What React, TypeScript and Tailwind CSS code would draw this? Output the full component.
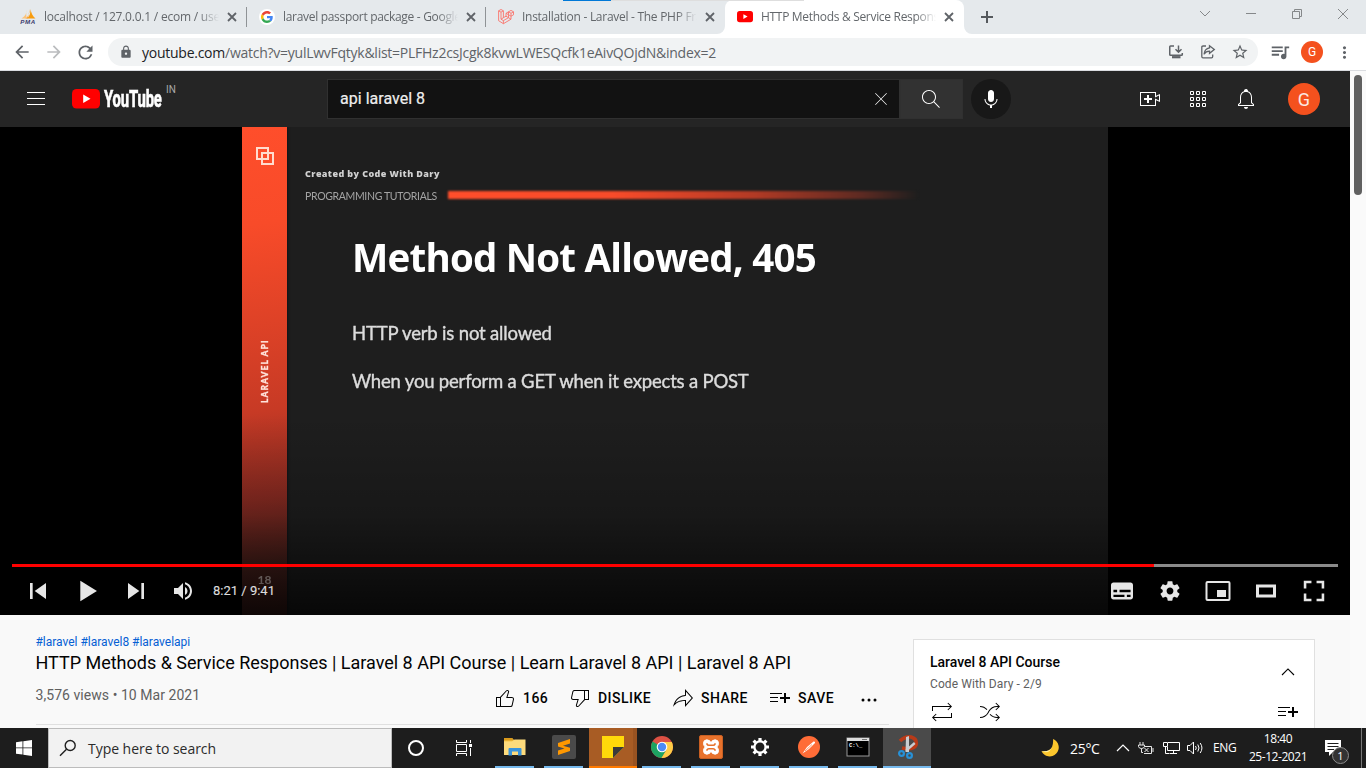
import React from "react";
import { MdArrowBack, MdArrowForward, MdRefresh, MdLock, MdStarBorder, MdQueueMusic, MdMoreVert } from "react-icons/md";

const ui = "font-['Open_Sans','Noto_Sans',sans-serif]";
const rb = "font-[Roboto,sans-serif]";

type IconProps = { d: string; size?: number; box?: number; className?: string };
const Icon = ({ d, size = 24, box = 24, className = "" }: IconProps) => (
  <svg width={size} height={size} viewBox={`0 0 ${box} ${box}`} fill="currentColor" className={`block shrink-0 ${className}`}>
    <path fillRule="evenodd" d={d} />
  </svg>
);

const P = {
  menu: "M21,6H3V5h18V6z M21,11H3v1h18V11z M21,17H3v1h18V17z",
  search:
    "M20.87,20.17l-5.59-5.59C16.35,13.35,17,11.75,17,10c0-3.87-3.13-7-7-7s-7,3.13-7,7s3.13,7,7,7c1.75,0,3.35-0.65,4.58-1.71 l5.59,5.59L20.87,20.17z M10,16c-3.31,0-6-2.69-6-6s2.69-6,6-6s6,2.69,6,6S13.31,16,10,16z",
  clear:
    "M12.71,12l8.15,8.15l-0.71,0.71L12,12.71l-8.15,8.15l-0.71-0.71L11.29,12L3.15,3.85l0.71-0.71L12,11.29l8.15-8.15l0.71,0.71 L12.71,12z",
  mic: "M12 3C10.34 3 9 4.37 9 6.07V11.93C9 13.63 10.34 15 12 15C13.66 15 15 13.63 15 11.93V6.07C15 4.37 13.66 3 12 3ZM18.5 12H17.5C17.5 15.03 15.03 17.5 12 17.5C8.97 17.5 6.5 15.03 6.5 12H5.5C5.5 15.24 7.89 17.93 11 18.41V21H13V18.41C16.11 17.93 18.5 15.24 18.5 12Z",
  create:
    "M14,13h-3v3H9v-3H6v-2h3V8h2v3h3V13z M17,6H3v12h14v-6.39l4,1.83V8.56l-4,1.83V6 M18,5v3.83L22,7v8l-4-1.83V19H2V5H18L18,5 z",
  bell: "M10,20h4c0,1.1-0.9,2-2,2S10,21.1,10,20z M20,17.35V19H4v-1.65l2-1.88v-5.15c0-2.92,1.56-5.22,4-5.98V3.96 c0-1.42,1.49-2.5,2.99-1.76C13.64,2.52,14,3.23,14,3.96l0,0.39c2.44,0.75,4,3.06,4,5.98v5.15L20,17.35z M19,17.77l-2-1.88v-5.47 c0-2.47-1.19-4.36-3.13-5.1c-1.26-0.53-2.64-0.5-3.84,0.03C8.15,6.11,7,7.99,7,10.42v5.47l-2,1.88V18h14V17.77z",
  like: "M18.77,11h-4.23l1.52-4.94C16.38,5.03,15.54,4,14.38,4c-0.58,0-1.14,0.24-1.52,0.65L7,11H3v10h4h1h9.43 c1.06,0,1.98-0.67,2.19-1.61l1.34-6C21.23,12.15,20.18,11,18.77,11z M7,20H4v-8h3V20z M19.98,13.17l-1.34,6 C18.54,19.65,18.03,20,17.43,20H8v-8.61l5.6-6.06C13.79,5.12,14.08,5,14.38,5c0.26,0,0.5,0.11,0.63,0.3 c0.07,0.1,0.15,0.26,0.09,0.47l-1.52,4.94L13.18,12h1.35h4.23c0.41,0,0.8,0.17,1.03,0.46C19.92,12.61,20.05,12.86,19.98,13.17z",
  dislike:
    "M17,4h-1H6.57C5.5,4,4.59,4.67,4.38,5.61l-1.34,6C2.77,12.85,3.82,14,5.23,14h4.23l-1.52,4.94C7.62,19.97,8.46,21,9.62,21 c0.58,0,1.14-0.24,1.52-0.65L17,14h4V4H17z M10.4,19.67C10.21,19.88,9.92,20,9.62,20c-0.26,0-0.5-0.11-0.63-0.3 c-0.07-0.1-0.15-0.26-0.09-0.47l1.52-4.94l0.4-1.29H9.46H5.23c-0.41,0-0.8-0.17-1.03-0.46c-0.12-0.15-0.25-0.4-0.18-0.72l1.34-6 C5.46,5.35,5.97,5,6.57,5H16v8.61L10.4,19.67z M20,13h-3V5h3V13z",
  share:
    "M15,5.63L20.66,12L15,18.37V15v-1h-1c-3.96,0-7.14,1-9.75,3.09c1.84-4.07,5.11-6.4,9.89-7.1L15,9.86V9V5.63 M14,3v6 C6.22,10.13,3.11,15.33,2,21c2.78-3.97,6.44-6,12-6v6l8-9L14,3L14,3z",
  save: "M22,13h-4v4h-2v-4h-4v-2h4V7h2v4h4V13z M14,7H2v1h12V7z M2,12h8v-1H2V12z M2,16h8v-1H2V16z",
  more: "M7.5,12a1.5,1.5 0 1 1 -3,0a1.5,1.5 0 1 1 3,0z M13.5,12a1.5,1.5 0 1 1 -3,0a1.5,1.5 0 1 1 3,0z M19.5,12a1.5,1.5 0 1 1 -3,0a1.5,1.5 0 1 1 3,0z",
  loop: "M21,13h1v5L3.93,18.03l2.62,2.62l-0.71,0.71L1.99,17.5l3.85-3.85l0.71,0.71l-2.67,2.67L21,17V13z M3,7l17.12-0.03 l-2.67,2.67l0.71,0.71l3.85-3.85l-3.85-3.85l-0.71,0.71l2.62,2.62L2,6v5h1V7z",
  shuffle:
    "M18.15,13.65L22,17.5l-3.85,3.85l-0.71-0.71L20.09,18H19c-2.84,0-5.53-1.23-7.39-3.38l0.76-0.65 C14.03,15.89,16.45,17,19,17h1.09l-2.65-2.65L18.15,13.65z M19,7h1.09l-2.65,2.65l0.71,0.71L22,6.5l-3.85-3.85l-0.71,0.71 L20.09,6H19c-3.58,0-6.86,1.95-8.57,5.09l-0.73,1.34C8.16,15.25,5.21,17,2,17v1c3.58,0,6.86-1.95,8.57-5.09l0.73-1.34 C12.84,8.75,15.79,7,19,7z M8.59,9.98l0.75-0.66C7.49,7.21,4.81,6,2,6v1C4.52,7,6.92,8.09,8.59,9.98z",
  up: "M18.4,14.6L12,8.3l-6.4,6.3l0.8,0.8L12,9.7l5.6,5.7L18.4,14.6z",
  prev: "m 12,12 h 2 v 12 h -2 z m 3.5,6 8.5,6 V 12 z",
  next: "M 12,24 20.5,18 12,12 V 24 z M 22,12 v 12 h 2 V 12 h -2 z",
  play: "M 12,26 25,18 12,10 z",
  volume:
    "M8,21 L12,21 L17,26 L17,10 L12,15 L8,15 L8,21 Z M19,14 L19,22 C20.48,21.32 21.5,19.77 21.5,18 C21.5,16.26 20.48,14.74 19,14 Z M19,11.29 C21.89,12.15 24,14.83 24,18 C24,21.17 21.89,23.85 19,24.71 L19,26.77 C23.01,25.86 26,22.28 26,18 C26,13.72 23.01,10.14 19,9.23 L19,11.29 Z",
  cc: "M11,11 C9.9,11 9,11.9 9,13 L9,23 C9,24.1 9.9,25 11,25 L25,25 C26.1,25 27,24.1 27,23 L27,13 C27,11.9 26.1,11 25,11 L11,11 Z M11,17 L14,17 L14,19 L11,19 Z M20,23 L11,23 L11,21 L20,21 Z M25,23 L22,23 L22,21 L25,21 Z M25,19 L16,19 L16,17 L25,17 Z",
  gear: "m 23.94,18.78 c .03,-0.25 .05,-0.51 .05,-0.78 0,-0.27 -0.02,-0.52 -0.05,-0.78 l 1.68,-1.32 c .15,-0.12 .19,-0.33 .09,-0.51 l -1.6,-2.76 c -0.09,-0.17 -0.31,-0.24 -0.48,-0.17 l -1.99,.8 c -0.41,-0.32 -0.86,-0.58 -1.35,-0.78 l -0.30,-2.12 c -0.02,-0.19 -0.19,-0.33 -0.39,-0.33 l -3.2,0 c -0.2,0 -0.36,.14 -0.39,.33 l -0.30,2.12 c -0.48,.2 -0.93,.47 -1.35,.78 l -1.99,-0.8 c -0.18,-0.07 -0.39,0 -0.48,.17 l -1.6,2.76 c -0.10,.17 -0.05,.39 .09,.51 l 1.68,1.32 c -0.03,.25 -0.05,.52 -0.05,.78 0,.26 .02,.52 .05,.78 l -1.68,1.32 c -0.15,.12 -0.19,.33 -0.09,.51 l 1.6,2.76 c .09,.17 .31,.24 .48,.17 l 1.99,-0.8 c .41,.32 .86,.58 1.35,.78 l .30,2.12 c .02,.19 .19,.33 .39,.33 l 3.2,0 c .2,0 .36,-0.14 .39,-0.33 l .30,-2.12 c .48,-0.2 .93,-0.47 1.35,-0.78 l 1.99,.8 c .18,.07 .39,0 .48,-0.17 l 1.6,-2.76 c .09,-0.17 .05,-0.39 -0.09,-0.51 l -1.68,-1.32 0,0 z m -5.94,2.01 c -1.54,0 -2.8,-1.25 -2.8,-2.8 0,-1.54 1.25,-2.8 2.8,-2.8 1.54,0 2.8,1.25 2.8,2.8 0,1.54 -1.25,2.8 -2.8,2.8 l 0,0 z",
  full: "m 10,16 2,0 0,-4 4,0 0,-2 L 10,10 l 0,6 0,0 z m 10,-6 0,2 4,0 0,4 2,0 L 26,10 l -6,0 0,0 z m 4,14 -4,0 0,2 6,0 0,-6 -2,0 0,4 0,0 z m -12,-4 -2,0 0,6 6,0 0,-2 -4,0 0,-4 0,0 z",
};

const PmaIcon = () => (
  <svg width="16" height="16" viewBox="0 0 16 16" className="block shrink-0">
    <path d="M6 .5 C7 4 5.5 7 1.500 9.500 H6.500 Z" fill="#fbc37a" />
    <path d="M10.500 0 C11 3.500 12.500 7 15.500 9.500 H7 C10 7 10.500 4 10.500 0Z" fill="#f89c0e" />
    <path d="M9.500 0 C9.800 4 8.500 7.500 5.500 9.500 L8 9.500Z" fill="#f9a63a" />
    <text x="0.3" y="15.200" fontSize="6.200" fontWeight="700" fontStyle="italic" fontFamily="Liberation Sans, sans-serif" fill="#3c3c6e" textLength="15">PMA</text>
  </svg>
);

const GoogleIcon = () => (
  <svg width="16" height="16" viewBox="0 0 16 16" className="block shrink-0">
    <circle cx="8" cy="8" r="8" fill="#fff" />
    <g transform="translate(2 2) scale(.25)">
      <path fill="#EA4335" d="M24 9.5c3.54 0 6.71 1.22 9.21 3.6l6.85-6.85C35.9 2.38 30.47 0 24 0 14.62 0 6.51 5.38 2.56 13.22l7.98 6.19C12.43 13.72 17.74 9.5 24 9.5z" />
      <path fill="#4285F4" d="M46.98 24.55c0-1.57-.15-3.09-.38-4.55H24v9.02h12.94c-.58 2.96-2.26 5.48-4.78 7.18l7.73 6c4.51-4.18 7.09-10.36 7.09-17.65z" />
      <path fill="#FBBC05" d="M10.53 28.59c-.48-1.45-.76-2.99-.76-4.59s.27-3.14.76-4.59l-7.98-6.19C.92 16.46 0 20.12 0 24c0 3.88.92 7.54 2.56 10.78l7.97-6.19z" />
      <path fill="#34A853" d="M24 48c6.48 0 11.93-2.13 15.89-5.81l-7.73-6c-2.15 1.45-4.92 2.3-8.16 2.3-6.26 0-11.57-4.22-13.47-9.91l-7.98 6.19C6.51 42.62 14.62 48 24 48z" />
    </g>
  </svg>
);

const LaravelIcon = () => (
  <svg width="16" height="16" viewBox="0 0 16 16" fill="none" stroke="#f9746c" strokeWidth="0.9" strokeLinejoin="round" className="block shrink-0">
    <path d="M.6 1.8 3 .5 5.400 1.800V8.700L8 7.200V4.300L10.500 5.700V8.700L5.400 11.600V14.700L.6 11.700ZM.6 1.800 3 3.200 5.400 1.800M3 3.200V10.200L5.400 8.700M3 10.200 5.400 11.600M8 4.300 10.500 2.800 10.500 5.700M10.500 2.800 13 1.400 15.500 2.800V5.800L13 7.200V10.200L5.400 14.700M10.500 2.800 13 4.300 15.500 2.800M13 4.300V7.200L10.500 5.700M8 7.200 10.500 8.700 13 10.200" />
  </svg>
);

const YtBadge = ({ w = 16 }: { w?: number }) => (
  <svg width={w} height={w * 0.7} viewBox="0 0 28 19.6" className="block shrink-0">
    <rect width="28" height="19.6" rx="4.6" fill="#f00" />
    <path d="M11.200 5.600 18.500 9.800 11.200 14Z" fill="#fff" />
  </svg>
);

const Tab = ({ icon, title, tracking, active, sep }: { icon: React.ReactNode; title: string; tracking: string; active?: boolean; sep?: boolean }) => (
  <div className={`relative flex h-[34px] w-[239px] shrink-0 items-center pl-3 ${active ? "rounded-t-lg bg-white" : ""}`}>
    {active && (
      <svg width="255" height="8" viewBox="0 0 255 8" className="absolute bottom-0 -left-2">
        <path d="M0 8A8 8 0 0 0 8 0V8ZM255 8A8 8 0 0 1 247 0V8Z" fill="#fff" />
      </svg>
    )}
    <div className="flex w-4 justify-center">{icon}</div>
    <div className={`ml-2 w-[175px] overflow-hidden text-[12px] whitespace-nowrap text-[#63676b] [mask-image:linear-gradient(90deg,#000_88%,transparent)] ${tracking}`}>{title}</div>
    <svg width="10" height="10" viewBox="0 0 10 10" className="ml-2 shrink-0" stroke="#5f6368" strokeWidth="1.800">
      <path d="M1 1 9 9M9 1 1 9" />
    </svg>
    {sep && <div className="absolute top-[7px] right-0 h-5 w-px bg-[#8f9396]" />}
  </div>
);

const Toolbar = () => (
  <div className="flex h-[37px] items-center border-b border-[#dadce0] bg-white pl-3 text-[#5f6368]">
    <MdArrowBack size={20} />
    <MdArrowForward size={20} className="ml-3 text-[#babcbe]" />
    <MdRefresh size={21} className="ml-[11px]" />
    <div className="ml-[12px] flex h-7 w-[1150px] items-center rounded-full bg-[#f1f3f4] pl-[11px]">
      <MdLock size={14} />
      <div className="ml-[9px] w-[580px] text-[14px] tracking-[-0.255px] whitespace-nowrap text-[#5f6368]">
        <span className="text-[#202124]">youtube.com</span>/watch?v=yulLwvFqtyk&amp;list=PLFHz2csJcgk8kvwLWESQcfk1eAivQOjdN&amp;index=2
      </div>
      <svg width="16" height="16" viewBox="0 0 16 16" fill="none" stroke="currentColor" strokeWidth="1.500" className="ml-[446px] shrink-0">
        <path d="M6 2H2.500Q1.750 2 1.750 2.750V10.500Q1.750 11.300 2.500 11.300H13.500Q14.300 11.300 14.300 10.500V9M10.500 1.500V8M7.500 5.300 10.500 8.300 13.500 5.300" />
        <path d="M4 13.200H12.500" strokeWidth="2.200" />
      </svg>
      <svg width="16" height="16" viewBox="0 0 16 16" fill="none" stroke="currentColor" strokeWidth="1.300" className="ml-4 shrink-0">
        <path d="M6 2H3Q1.800 2 1.800 3.200V12.600Q1.800 13.800 3 13.800H11.500Q12.700 13.800 12.700 12.600V10.500M9.500 1.800 14.300 5.500 9.500 9.300V7.200Q6 7.200 4 10.200Q4.600 4.700 9.500 3.900Z" />
      </svg>
      <MdStarBorder size={18} className="ml-[15px] shrink-0" />
    </div>
    <MdQueueMusic size={22} className="ml-[11px] shrink-0" />
    <div className="ml-[10px] flex h-[22px] w-[22px] items-center justify-center rounded-full bg-[#f4511e] font-[Roboto,sans-serif] text-[12px] text-white">G</div>
    <MdMoreVert size={19} className="ml-3 shrink-0" />
  </div>
);

const Header = () => (
  <header className={`flex h-14 items-center bg-[#252525] text-white ${rb}`}>
    <Icon d={P.menu} className="ml-6" />
    <div className="ml-6 flex w-[110px] items-center">
      <YtBadge w={28} />
      <div className="ml-[4px] w-[59px] origin-left scale-x-[0.605] text-[24.500px] leading-[24px] font-extrabold tracking-[-0.3px] [-webkit-text-stroke:0.5px_#fff]">YouTube</div>
      <div className="mt-[-18px] ml-[3px] text-[10px] leading-[12px] text-[#aaa]">IN</div>
    </div>
    <div className="ml-[145px] flex h-10 w-[573px] shrink-0 items-center border border-[#303030] bg-[#121212] pl-3">
      <div className="w-[529px] text-[16px] leading-6 tracking-[0.02px] text-[#eee] [-webkit-text-stroke:0.2px_#eee]">api laravel 8</div>
      <Icon d={P.clear} size={16} className="ml-1" />
    </div>
    <div className="flex h-10 w-[63px] shrink-0 items-center justify-center border border-[#303030] bg-[#323232] pr-[2px]"><Icon d={P.search} size={24} /></div>
    <div className="ml-2 flex h-10 w-10 items-center justify-center rounded-full bg-[#181818]"><Icon d={P.mic} /></div>
    <Icon d={P.create} className="ml-[127px]" />
    <svg width="16" height="16" viewBox="0 0 16 16" fill="none" stroke="#fff" className="ml-7 shrink-0">
      <path d="M.5.5h3v3h-3zM6.500.5h3v3h-3zM12.500.5h3v3h-3zM.5 6.500h3v3h-3zM6.500 6.500h3v3h-3zM12.500 6.500h3v3h-3zM.5 12.500h3v3h-3zM6.500 12.500h3v3h-3zM12.500 12.500h3v3h-3z" />
    </svg>
    <Icon d={P.bell} className="ml-7" />
    <div className="ml-[30px] flex h-8 w-8 items-center justify-center rounded-full bg-[#f4511e] text-[18px] text-[#fbe9e2]">G</div>
  </header>
);

const Slide = () => (
  <div className="flex h-full w-[866px] overflow-hidden bg-[#1e1e1e] text-[#dcdcdc]">
    <div className="flex h-full w-[45px] shrink-0 flex-col items-center bg-[linear-gradient(172deg,#ff4e2b_0%,#f84b29_20%,#c73a25_58%,#8a2b22_76%,#4a221d_90%,#3a1a17_100%)] shadow-[1px_0_2px_#101418]">
      <svg width="20" height="20" viewBox="0 0 20 20" fill="none" stroke="#ffdccf" strokeWidth="2" className="mt-[19px] ml-px blur-[0.4px]">
        <path d="M2 2H13V13H2ZM7 7H18V18H7Z" />
      </svg>
      <div className="mt-[173px] h-[64px] w-[10px] rotate-180 font-[Lato,sans-serif] text-[8.500px] leading-[10px] font-black tracking-[1.05px] whitespace-nowrap text-[#ffe4dc] blur-[0.4px] [-webkit-text-stroke:0.3px_#ffe4dc] [writing-mode:vertical-rl]">LARAVEL API</div>
      <div className="mt-[169px] font-[Lato,sans-serif] text-[12px] leading-4 font-bold text-[#d8c4c0] blur-[0.6px]">18</div>
    </div>
    <div className="flex flex-col pl-[18px]">
      <div className="mt-[41px] font-['Open_Sans',sans-serif] text-[9px] leading-3 font-extrabold tracking-[0.41px] whitespace-nowrap text-[#d0d0d0] blur-[0.5px]">Created by Code With Dary</div>
      <div className="mt-[8px] flex items-center">
        <div className="w-[143px] font-[Lato,sans-serif] text-[10.500px] leading-4 tracking-[-0.34px] whitespace-nowrap text-[#a4a4a4] blur-[0.5px]">PROGRAMMING TUTORIALS</div>
        <div className="mt-[-3px] h-[8px] w-[470px] bg-[linear-gradient(90deg,#ff4e2b_0%,#f84b2a_35%,#b23a25_65%,#5d2a22_88%,#1e1e1e_100%)] blur-[0.8px]" />
      </div>
      <div className="mt-[25px] pl-[47px] font-['Open_Sans',sans-serif] text-[38.500px] leading-[56px] font-bold tracking-[-0.79px] whitespace-nowrap text-white blur-[0.6px]">Method Not Allowed, 405</div>
      <div className="mt-[36px] pl-[47px] font-[Lato,sans-serif] text-[18.500px] leading-[24px] tracking-[-0.17px] whitespace-nowrap blur-[0.5px] [-webkit-text-stroke:0.4px_#dcdcdc]">HTTP verb is not allowed</div>
      <div className="mt-[24px] pl-[47px] font-[Lato,sans-serif] text-[18.500px] leading-[24px] tracking-[-0.19px] whitespace-nowrap blur-[0.5px] [-webkit-text-stroke:0.4px_#dcdcdc]">When you perform a GET when it expects a POST</div>
    </div>
  </div>
);

const Player = () => (
  <section className="relative flex h-[488px] justify-center bg-black">
    <Slide />
    <div className="absolute inset-x-0 bottom-0 flex h-[200px] flex-col justify-end bg-gradient-to-t from-black/75 via-black/20 to-transparent text-[#e6e6e6]">
      <div className="mx-3 flex h-[3px]">
        <div className="w-[1142px] bg-[#f00]" />
        <div className="flex-1 bg-[#8a8a8a]" />
      </div>
      <div className={`flex h-12 items-center ${rb}`}>
        <Icon d={P.prev} size={48} box={36} className="ml-[14px]" />
        <Icon d={P.play} size={46} box={36} className="ml-[3px]" />
        <Icon d={P.next} size={48} box={36} className="ml-px" />
        <Icon d={P.volume} size={36} box={36} className="ml-[6px]" />
        <div className="ml-[11px] w-[62px] text-[13px] whitespace-nowrap text-[#ddd] [-webkit-text-stroke:0.15px_#ddd]">8:21 / 9:41</div>
        <Icon d={P.cc} size={44} box={36} className="ml-[825px]" />
        <Icon d={P.gear} size={44} box={36} className="ml-[4px]" />
        <svg width="48" height="48" viewBox="0 0 48 48" className="ml-[2px] shrink-0"><path fill="none" stroke="currentColor" strokeWidth="2" d="M12.500 16Q12.500 15 13.500 15H34.500Q35.500 15 35.500 16V32Q35.500 33 34.500 33H13.500Q12.500 33 12.500 32Z" /><path fill="currentColor" d="M23 23H32V30H23Z" /></svg>
        <svg width="48" height="48" viewBox="0 0 48 48" className="shrink-0"><path fill="none" stroke="currentColor" strokeWidth="3" d="M15.500 19H32.500V29H15.500Z" /></svg>
        <Icon d={P.full} size={46} box={36} className="ml-px" />
      </div>
    </div>
  </section>
);

const Action = ({ d, label, cls }: { d: string; label: string; cls: string }) => (
  <div className={`flex shrink-0 items-center gap-1.5 whitespace-nowrap ${cls}`}><Icon d={d} /><span>{label}</span></div>
);

const Details = () => (
  <section className={`flex h-[113px] overflow-hidden bg-[#f9f9f9] ${rb}`}>
    <div className="ml-[36px] flex w-[853px] shrink-0 flex-col">
      <div className="mt-[19px] ml-[-0.5px] text-[12px] leading-[16px] tracking-[-0.02px] text-[#065fd4]">#laravel #laravel8 #laravelapi</div>
      <h1 className="ml-[-0.5px] text-[18px] leading-[26px] font-normal tracking-[-0.01px] whitespace-nowrap text-[#030303]">HTTP Methods &amp; Service Responses | Laravel 8 API Course | Learn Laravel 8 API | Laravel 8 API</h1>
      <div className="flex h-[49px] items-center border-b border-[#e0e0e0] pb-[4px] text-[14px] font-medium tracking-[0.48px] text-[#030303]">
        <div className="ml-[-0.5px] w-[457.500px] pb-[5px] font-normal tracking-[0.05px] text-[#606060]">3,576 views • 10 Mar 2021</div>
        <Action d={P.like} label="166" cls="w-[75px]" />
        <Action d={P.dislike} label="DISLIKE" cls="w-[103px]" />
        <Action d={P.share} label="SHARE" cls="w-[97px]" />
        <Action d={P.save} label="SAVE" cls="w-[89px]" />
        <Icon d={P.more} className="mt-[4px]" />
      </div>
    </div>
    <aside className="mt-6 ml-[24px] flex h-[120px] w-[402px] shrink-0 border border-[#e0e0e0] bg-white pr-[14px] pl-4">
      <div className="flex-1">
        <div className="mt-[12px] text-[14px] leading-5 font-medium tracking-[-0.02px] text-[#030303]">Laravel 8 API Course</div>
        <div className="mt-[4px] text-[12px] leading-4 tracking-[0.1px] text-[#606060]">Code With Dary - 2/9</div>
        <div className="mt-2 flex gap-6 text-[#030303]"><Icon d={P.loop} /><Icon d={P.shuffle} /></div>
      </div>
      <div className="flex flex-col text-[#030303]"><Icon d={P.up} className="mt-5" /><Icon d={P.save} className="mt-4" /></div>
    </aside>
  </section>
);

const Sv = ({ children }: { children: React.ReactNode }) => <svg width="24" height="24" viewBox="0 0 24 24" className="block">{children}</svg>;

const apps: { bg: string; line: string; icon: React.ReactNode }[] = [
  { bg: "", line: "mx-[5px] bg-[#76b9ed]", icon: <Sv><path d="M1 3H9L11 5H22V20H1Z" fill="#f7c64a" /><path d="M1 3H9L11 5.500H1Z" fill="#d99a1c" /><path d="M1 6.500H9L11.500 4.500H22.500V20H1Z" fill="#fddb7c" /><path d="M5.500 20.500V14Q5.500 13 6.500 13H17.500Q18.500 13 18.500 14V20.500H15V16.500H9V20.500Z" fill="#3a94dc" /></Sv> },
  { bg: "", line: "mx-[5px] bg-[#76b9ed]", icon: <Sv><rect width="24" height="24" rx="2" fill="#4a4a4a" /><path d="M6 8 18 4V8.500L11 10.700 18 12.700V16L6 20V15.600L12.500 13.500 6 11.500Z" fill="#ff9800" /></Sv> },
  { bg: "ml-px border-r-4 border-[#995321] bg-[#a85c24]", line: "ml-px bg-[#ff7a00]", icon: <svg width="22" height="22" viewBox="0 0 22 22" className="ml-[4px]"><path d="M0 0H22V11L11 22H0Z" fill="#ffd90a" /><path d="M11 11H22L11 22Z" fill="#3a3a3a" /></svg> },
  { bg: "", line: "mx-[5px] bg-[#76b9ed]", icon: <Sv><circle cx="12" cy="12" r="11" fill="#dd5144" /><path d="M12 12 2.500 6.500A11 11 0 0 0 11.500 23L16.800 14.800Z" fill="#1da462" /><path d="M12 7H21.800A11 11 0 0 1 11.500 23L16.600 14.500Z" fill="#ffcd46" /><circle cx="12" cy="12" r="5.300" fill="#fff" /><circle cx="12" cy="12" r="4.200" fill="#4c8bf5" /></Sv> },
  { bg: "", line: "mx-[5px] bg-[#76b9ed]", icon: <Sv><rect x=".5" y=".5" width="23" height="23" rx="1.500" fill="#e8722c" stroke="#c85f22" /><path d="M12 8.500Q11.500 4.800 7.800 4.800Q4.500 5 4.500 8.300Q4.500 10.500 6.200 12Q4.500 13.500 4.500 15.700Q4.500 19 7.800 19.200Q11.500 19.200 12 15.500Q12.500 19.200 16.200 19.200Q19.500 19 19.500 15.700Q19.500 13.500 17.800 12Q19.500 10.500 19.500 8.300Q19.500 5 16.200 4.800Q12.500 4.800 12 8.500Z" fill="#fff" stroke="#fff" /><path d="M8 8.300V9.200Q8.500 10.300 9.800 10.300H14.200Q15.500 10.300 16 9.200V8.300M8 15.700V14.800Q8.500 13.700 9.800 13.700H14.200Q15.500 13.700 16 14.800V15.700" fill="none" stroke="#e8722c" strokeWidth="1.600" /></Sv> },
  { bg: "", line: "mx-[5px] bg-[#76b9ed]", icon: <Sv><circle cx="12" cy="12" r="5.600" fill="none" stroke="#fff" strokeWidth="2.300" /><path d="M12 3V6M12 18V21M3 12H6M18 12H21M5.600 5.600 7.700 7.700M16.300 16.300 18.400 18.400M5.600 18.400 7.700 16.300M16.300 7.700 18.400 5.600" stroke="#fff" strokeWidth="3.200" /></Sv> },
  { bg: "", line: "mx-[5px] bg-[#76b9ed]", icon: <Sv><circle cx="12" cy="12" r="11" fill="#ff6c37" /><path d="M5.500 18.500 10 12 16.500 6.500Q18.500 6 18 8L12 14Z" fill="#fff" /><path d="M8 16 15 9.500" stroke="#ff9b73" strokeWidth="1" /></Sv> },
  { bg: "", line: "mx-[5px] bg-[#76b9ed]", icon: <Sv><rect x="1" y="3" width="22" height="18" fill="#000" stroke="#9a9a9a" /><path d="M1 3H23V6H1Z" fill="#ddd" /><path d="M16 4.500H21" stroke="#777" /><text x="3" y="12" fontSize="5.500" fontWeight="700" fontFamily="Liberation Mono, monospace" fill="#fff">C:\_</text></Sv> },
  { bg: "ml-px bg-[#4a4a4a]", line: "ml-px bg-[#76b9ed]", icon: <Sv><path d="M5 6Q10 1 16 2Q22.500 4 21 10Q18.500 15.500 7 13" fill="none" stroke="#b93a18" strokeWidth="3.600" /><path d="M11 2 14 1 14 17H10.500ZM19 7 20.500 9 12 16.500 10 15Z" fill="#c9ccd0" /><g fill="none" stroke="#2791d8" strokeWidth="2.200"><circle cx="6.500" cy="18.500" r="2.400" /><circle cx="14.500" cy="20.500" r="2.400" /></g></Sv> },
];

const Taskbar = () => (
  <footer className={`flex h-10 shrink-0 bg-[#1d1d1d] text-white ${ui}`}>
    <div className="flex w-12 items-center justify-center">
      <svg width="16" height="16" viewBox="0 0 16 16" fill="#fff"><path d="M0 2.200 6.500 1.300V7.500H0ZM7.300 1.200 16 0V7.500H7.300ZM0 8.300H6.500V14.600L0 13.700ZM7.300 8.300H16V16L7.300 14.700Z" /></svg>
    </div>
    <div className="flex w-[344px] items-center border border-[#bcbcbc] bg-[#f2f2f2] pl-[10px] text-[14px] text-[#2b2b2b]">
      <svg width="18" height="18" viewBox="0 0 18 18" fill="none" stroke="#1f1f1f" strokeWidth="1.400"><circle cx="11.200" cy="6.500" r="5" /><path d="M7.500 10.200 1 16.700" /></svg>
      <span className="ml-[11px] tracking-[-0.04px] whitespace-nowrap">Type here to search</span>
    </div>
    <div className="flex w-12 items-center justify-center"><div className="h-4 w-4 rounded-full border-2 border-white" /></div>
    <div className="flex w-[50px] items-center pl-4">
      <svg width="17" height="16" viewBox="0 0 17 16" fill="none" stroke="#fff"><path d="M.5 0V2.500H10.500V0M.5 4.500H10.500V11.500H.5ZM.5 16V13.500H10.500V16M14.500 0V3M14.500 8V16" /><path d="M13 4H16V7H13Z" fill="#fff" stroke="none" /></svg>
    </div>
    <div className="flex w-[442px]">
      {apps.map((a, i) => (
        <div key={i} className="flex w-[49px] shrink-0 flex-col">
          <div className={`flex h-[38px] items-center justify-center ${a.bg}`}>{a.icon}</div>
          <div className={`h-[2px] ${a.line}`} />
        </div>
      ))}
    </div>
    <div className="ml-[108px] flex w-[30px] items-center">
      <svg width="20" height="20" viewBox="0 0 20 20"><path d="M13 1A9 9 0 1 1 1.500 13Q9 14.500 12 9Q13.500 5 13 1Z" fill="#fcc62d" /><path d="M1.500 13Q9 14.500 12 9Q9 17 1.500 13Z" fill="#fff0a0" /></svg>
    </div>
    <div className="flex w-[46px] items-center text-[14px] tracking-[-0.3px]">25°C</div>
    <div className="flex w-[22px] items-center"><svg width="14" height="8" viewBox="0 0 14 8" fill="none" stroke="#fff" strokeWidth="1.200"><path d="M1 7 7 1 13 7" /></svg></div>
    <div className="flex w-[25px] items-center">
      <svg width="16" height="13" viewBox="0 0 16 13" fill="none" stroke="#e8e8e8"><path d="M2 0V3M5 0V3M.5 3H6.500V4.500Q6 6.500 3.500 6.500Q1 6.500.5 4.500ZM3.500 6.500V10.500H5M6.500 4.500H13.500V11.500H6M15 6V10" /><path d="M6.500 6 10.500 10M10.500 6 6.500 10" /></svg>
    </div>
    <div className="flex w-6 items-center">
      <svg width="17" height="14" viewBox="0 0 17 14" fill="none" stroke="#fff"><path d="M5 1.500H16.500V9.500H4.500V6M.5 1.500H4.500V5.500H.5ZM2.500 5.500V12.500H6.500M10.500 9.500V12.500M7 12.500H14" /></svg>
    </div>
    <div className="flex w-[26px] items-center">
      <svg width="17" height="14" viewBox="0 0 17 14" fill="none" stroke="#fff"><path d="M.5 4.500H3L6.500 1V13L3 9.500H.5ZM8.500 5Q10 7 8.500 9M10.800 3.500Q13.200 7 10.800 10.500M13.200 2Q16.700 7 13.200 12" /></svg>
    </div>
    <div className="flex w-[36px] items-center text-[12px] tracking-[-0.3px]">ENG</div>
    <div className="flex w-[58px] flex-col items-center justify-center text-[12px] leading-[18px] tracking-[-0.45px] whitespace-nowrap"><span>18:40</span><span>25-12-2021</span></div>
    <div className="relative ml-[18px] flex w-9 items-center">
      <svg width="17" height="16" viewBox="0 0 17 16" className="mb-px"><path d="M0 0H16V12H8L4 16V12H0Z" fill="#fff" /><path d="M2.500 3.500H13.500M2.500 6.500H13.500M2.500 9.500H9" stroke="#1d1d1d" /></svg>
      <div className="absolute top-[19px] left-[7px] flex h-[17px] w-[17px] items-center justify-center rounded-full border border-[#8c8c8c] bg-[#333] text-[11px] leading-none">1</div>
    </div>
    <div className="w-px bg-[#777]" />
  </footer>
);

export default function App() {
  return (
    <div className={`flex h-[768px] w-[1366px] flex-col overflow-hidden bg-[#f9f9f9] ${ui}`}>
      <div className="relative flex h-[34px] shrink-0 bg-[#e5e9ec] pl-2">
        <Tab icon={<PmaIcon />} title="localhost / 127.0.0.1 / ecom / users" tracking="tracking-[-0.22px]" sep />
        <Tab icon={<GoogleIcon />} title="laravel passport package - Google Search" tracking="tracking-[-0.31px]" sep />
        <Tab icon={<LaravelIcon />} title="Installation - Laravel - The PHP Framework" tracking="tracking-[-0.28px]" />
        <Tab icon={<YtBadge />} title="HTTP Methods & Service Responses" tracking="tracking-[-0.31px]" active />
        <svg width="12" height="12" viewBox="0 0 12 12" stroke="#55595d" strokeWidth="2" className="mt-[11px] ml-[17px]"><path d="M6 0V12M0 6H12" /></svg>
        <div className="ml-[189px] flex h-7 items-center text-[#85888a]">
          {["M1 3 6 8 11 3", "M1 5.500H11", "M1.500 3.500H8.500V10.500H1.500ZM3.500 3.500V1.500H10.500V8.500H8.500", "M1 1 11 11M11 1 1 11"].map((d) => (
            <div key={d} className="flex w-[46px] justify-center"><svg width="12" height="12" viewBox="0 0 12 12" fill="none" stroke="currentColor"><path d={d} /></svg></div>
          ))}
        </div>
        <div className="absolute top-0 left-[563px] flex h-px w-[241px] bg-[#dedede]"><div className="w-12 bg-[#0078d7]" /></div>
      </div>
      <Toolbar />
      <div className="flex h-[657px] shrink-0">
        <main className="w-[1350px] shrink-0"><Header /><Player /><Details /></main>
        <div className="flex w-4 justify-center bg-[#fafafa] pt-1"><div className="h-[120px] w-2 rounded-full bg-[#606060]" /></div>
      </div>
      <Taskbar />
    </div>
  );
}
